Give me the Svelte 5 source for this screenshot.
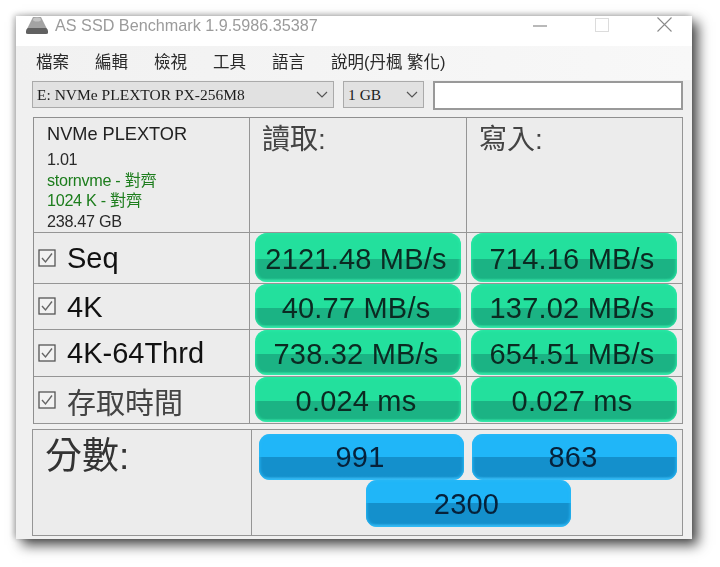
<script>
  const menus = ['檔案', '編輯', '檢視', '工具', '語言', '說明(丹楓 繁化)'];
  const rows = [
    { name: 'Seq', read: '2121.48 MB/s', write: '714.16 MB/s', h: 51 },
    { name: '4K', read: '40.77 MB/s', write: '137.02 MB/s', h: 46 },
    { name: '4K-64Thrd', read: '738.32 MB/s', write: '654.51 MB/s', h: 47 },
    { name: '存取時間', read: '0.024 ms', write: '0.027 ms', h: 47, cjk: true }
  ];
</script>

<div class="page">
  <div class="window">
    <header class="title">
      <svg class="app-icon" width="22" height="17" viewBox="0 0 22 17" aria-hidden="true">
        <path d="M7 0 H15 L21 12 H1 Z" fill="#a3a3a3" />
        <path d="M2 11 H20 Q22 12 22 14 V16 Q22 17 20 17 H2 Q0 17 0 16 V14 Q0 12 2 11 Z" fill="#616161" />
        <ellipse cx="11" cy="2.5" rx="4" ry="2" fill="#c4c4c4" />
      </svg>
      <span class="title-text">AS SSD Benchmark 1.9.5986.35387</span>
      <div class="caption">
        <svg width="14" height="14" viewBox="0 0 14 14" aria-hidden="true"><path d="M0 8 H14" stroke="#8a8a8a" stroke-width="1.2" /></svg>
        <svg width="14" height="14" viewBox="0 0 14 14" aria-hidden="true"><rect x="0.5" y="0.5" width="13" height="13" fill="none" stroke="#dcdcdc" /></svg>
        <svg width="15" height="15" viewBox="0 0 15 15" aria-hidden="true"><path d="M0.5 0.5 L14.5 14.5 M14.5 0.5 L0.5 14.5" stroke="#8a8a8a" stroke-width="1.1" /></svg>
      </div>
    </header>

    <nav class="menu">
      {#each menus as m}<span>{m}</span>{/each}
    </nav>

    <div class="controls">
      <div class="combo drive">
        <span>E: NVMe PLEXTOR PX-256M8</span>
        <svg width="12" height="7" viewBox="0 0 12 7" aria-hidden="true"><path d="M1 1 L6 6 L11 1" fill="none" stroke="#555" stroke-width="1.2" /></svg>
      </div>
      <div class="combo size">
        <span>1 GB</span>
        <svg width="12" height="7" viewBox="0 0 12 7" aria-hidden="true"><path d="M1 1 L6 6 L11 1" fill="none" stroke="#555" stroke-width="1.2" /></svg>
      </div>
      <div class="textbox"></div>
    </div>

    <section class="results">
      <div class="cell info">
        <div class="model">NVMe PLEXTOR</div>
        <div class="line">1.01</div>
        <div class="line ok">stornvme - 對齊</div>
        <div class="line ok">1024 K - 對齊</div>
        <div class="line">238.47 GB</div>
      </div>
      <div class="cell heading">讀取:</div>
      <div class="cell heading">寫入:</div>

      {#each rows as r}
        <div class="cell rowname" class:cjk={r.cjk} style="height: {r.h}px">
          <svg width="18" height="18" viewBox="0 0 18 18" aria-hidden="true">
            <rect x="1" y="1" width="16" height="16" fill="#f2f2f2" stroke="#555" stroke-width="1.3" />
            <path d="M4 9 L7.5 13 L14 4.5" fill="none" stroke="#666" stroke-width="1.4" />
          </svg>
          <span>{r.name}</span>
        </div>
        <div class="cell value read"><div class="pill green">{r.read}</div></div>
        <div class="cell value write"><div class="pill green">{r.write}</div></div>
      {/each}
    </section>

    <section class="scores">
      <div class="score-label">分數:</div>
      <div class="score-values">
        <div class="pill blue">991</div>
        <div class="pill blue">863</div>
        <div class="pill blue total">2300</div>
      </div>
    </section>
  </div>
</div>

<style>
  :global(body) {
    margin: 0;
    background: #fff;
  }
  .page {
    box-sizing: border-box;
    height: 567px;
    padding: 16px 0 0 16px;
    overflow: hidden;
  }
  .window {
    box-sizing: border-box;
    width: 676px;
    height: 523px;
    background: #f0f0f0;
    box-shadow: 6px 6px 12px rgba(0, 0, 0, 0.72), -2px -1px 6px rgba(0, 0, 0, 0.25);
    font-family: "Liberation Sans", "Noto Sans CJK TC", sans-serif;
    color: #111;
    filter: blur(0.7px);
  }
  .title {
    display: flex;
    align-items: flex-start;
    height: 30px;
    background: #fff;
    padding: 0 20px 0 10px;
    box-sizing: border-box;
  }
  .app-icon {
    margin-top: 1px;
  }
  .title-text {
    margin-left: 7px;
    font-size: 16.2px;
    line-height: 18px;
    color: #9b9b9b;
  }
  .caption {
    margin-left: auto;
    margin-top: 1px;
    display: flex;
    align-items: center;
    gap: 48px;
  }
  .menu {
    display: flex;
    gap: 26px;
    height: 34px;
    padding: 7px 0 0 20px;
    box-sizing: border-box;
    font-size: 16.5px;
    line-height: 18px;
    color: #2a2a2a;
    background: linear-gradient(90deg, #f1f1f1, #f8f8f8);
  }
  .controls {
    display: flex;
    gap: 9px;
    padding: 1px 9px 0 16px;
    height: 37px;
    box-sizing: border-box;
    align-items: flex-start;
  }
  .combo {
    box-sizing: border-box;
    height: 27px;
    display: flex;
    align-items: center;
    justify-content: space-between;
    padding: 0 5px 0 4px;
    background: #e1e1e1;
    border: 1px solid #aaa;
    font-family: "Liberation Serif", "Noto Sans CJK TC", serif;
    font-size: 15.5px;
    color: #1c1c1c;
  }
  .drive { width: 302px; }
  .size { width: 81px; }
  .textbox {
    box-sizing: border-box;
    flex: 1;
    height: 29px;
    background: #fff;
    border: 2px solid #999;
  }
  .results {
    display: grid;
    grid-template-columns: 216px 217px 216px;
    width: 650px;
    margin-left: 17px;
    border-top: 1px solid #8f8f8f;
    border-left: 1px solid #8f8f8f;
    box-sizing: border-box;
    background: #ececec;
  }
  .cell {
    box-sizing: border-box;
    border-right: 1px solid #959595;
    border-bottom: 1px solid #959595;
  }
  .info {
    height: 115px;
    padding: 5px 0 0 13px;
  }
  .model {
    font-size: 18.2px;
    line-height: 22px;
    color: #222;
    margin-bottom: 4px;
  }
  .line {
    font-size: 16.2px;
    line-height: 20.5px;
    color: #2a2a2a;
    letter-spacing: -0.3px;
  }
  .ok {
    color: #1d7d1d;
  }
  .heading {
    padding: 4px 0 0 12px;
    font-size: 28px;
    line-height: 36px;
    color: #444;
  }
  .rowname {
    display: flex;
    align-items: center;
    gap: 11px;
    padding: 1px 0 0 4px;
    font-size: 29px;
    color: #111;
  }
  .rowname svg {
    margin-top: -2px;
  }
  .rowname.cjk {
    color: #444;
  }
  .value {
    padding-bottom: 1px;
  }
  .read {
    padding-left: 5px;
    padding-right: 5px;
  }
  .write {
    padding-left: 4px;
    padding-right: 5px;
  }
  .pill {
    box-sizing: border-box;
    height: 100%;
    border-radius: 12px;
    display: flex;
    align-items: center;
    justify-content: center;
    padding: 4px 4px 0 0;
    font-size: 29px;
    letter-spacing: 0.2px;
    color: #0b2a22;
  }
  .green {
    background: linear-gradient(#23e09d 0, #23e09d 54%, #1bb384 54%, #1bb384 92%, #45efb0 100%);
    box-shadow: inset 0 0 3px 1px #2ae8a6;
  }
  .blue {
    height: 46px;
    padding: 1px 3px 0 0;
    border-radius: 11px;
    color: #06213a;
    background: linear-gradient(#20b6f8 0, #20b6f8 50%, #1490cc 50%, #1490cc 92%, #48c4f8 100%);
    box-shadow: inset 0 0 3px 1px #28b8f6;
  }
  .scores {
    display: grid;
    grid-template-columns: 219px 1fr;
    width: 651px;
    height: 107px;
    margin: 5px 0 0 16px;
    box-sizing: border-box;
    border: 1px solid #959595;
    background: #ececec;
  }
  .score-label {
    border-right: 1px solid #959595;
    padding: 5px 0 0 12px;
    font-size: 37px;
    line-height: 44px;
    color: #333;
  }
  .score-values {
    display: grid;
    grid-template-columns: 205px 205px;
    grid-template-rows: 46px 47px;
    column-gap: 8px;
    padding: 4px 0 0 7px;
  }
  .total {
    grid-column: 1 / 3;
    width: 205px;
    justify-self: center;
    height: 47px;
    padding-top: 2px;
  }
</style>
